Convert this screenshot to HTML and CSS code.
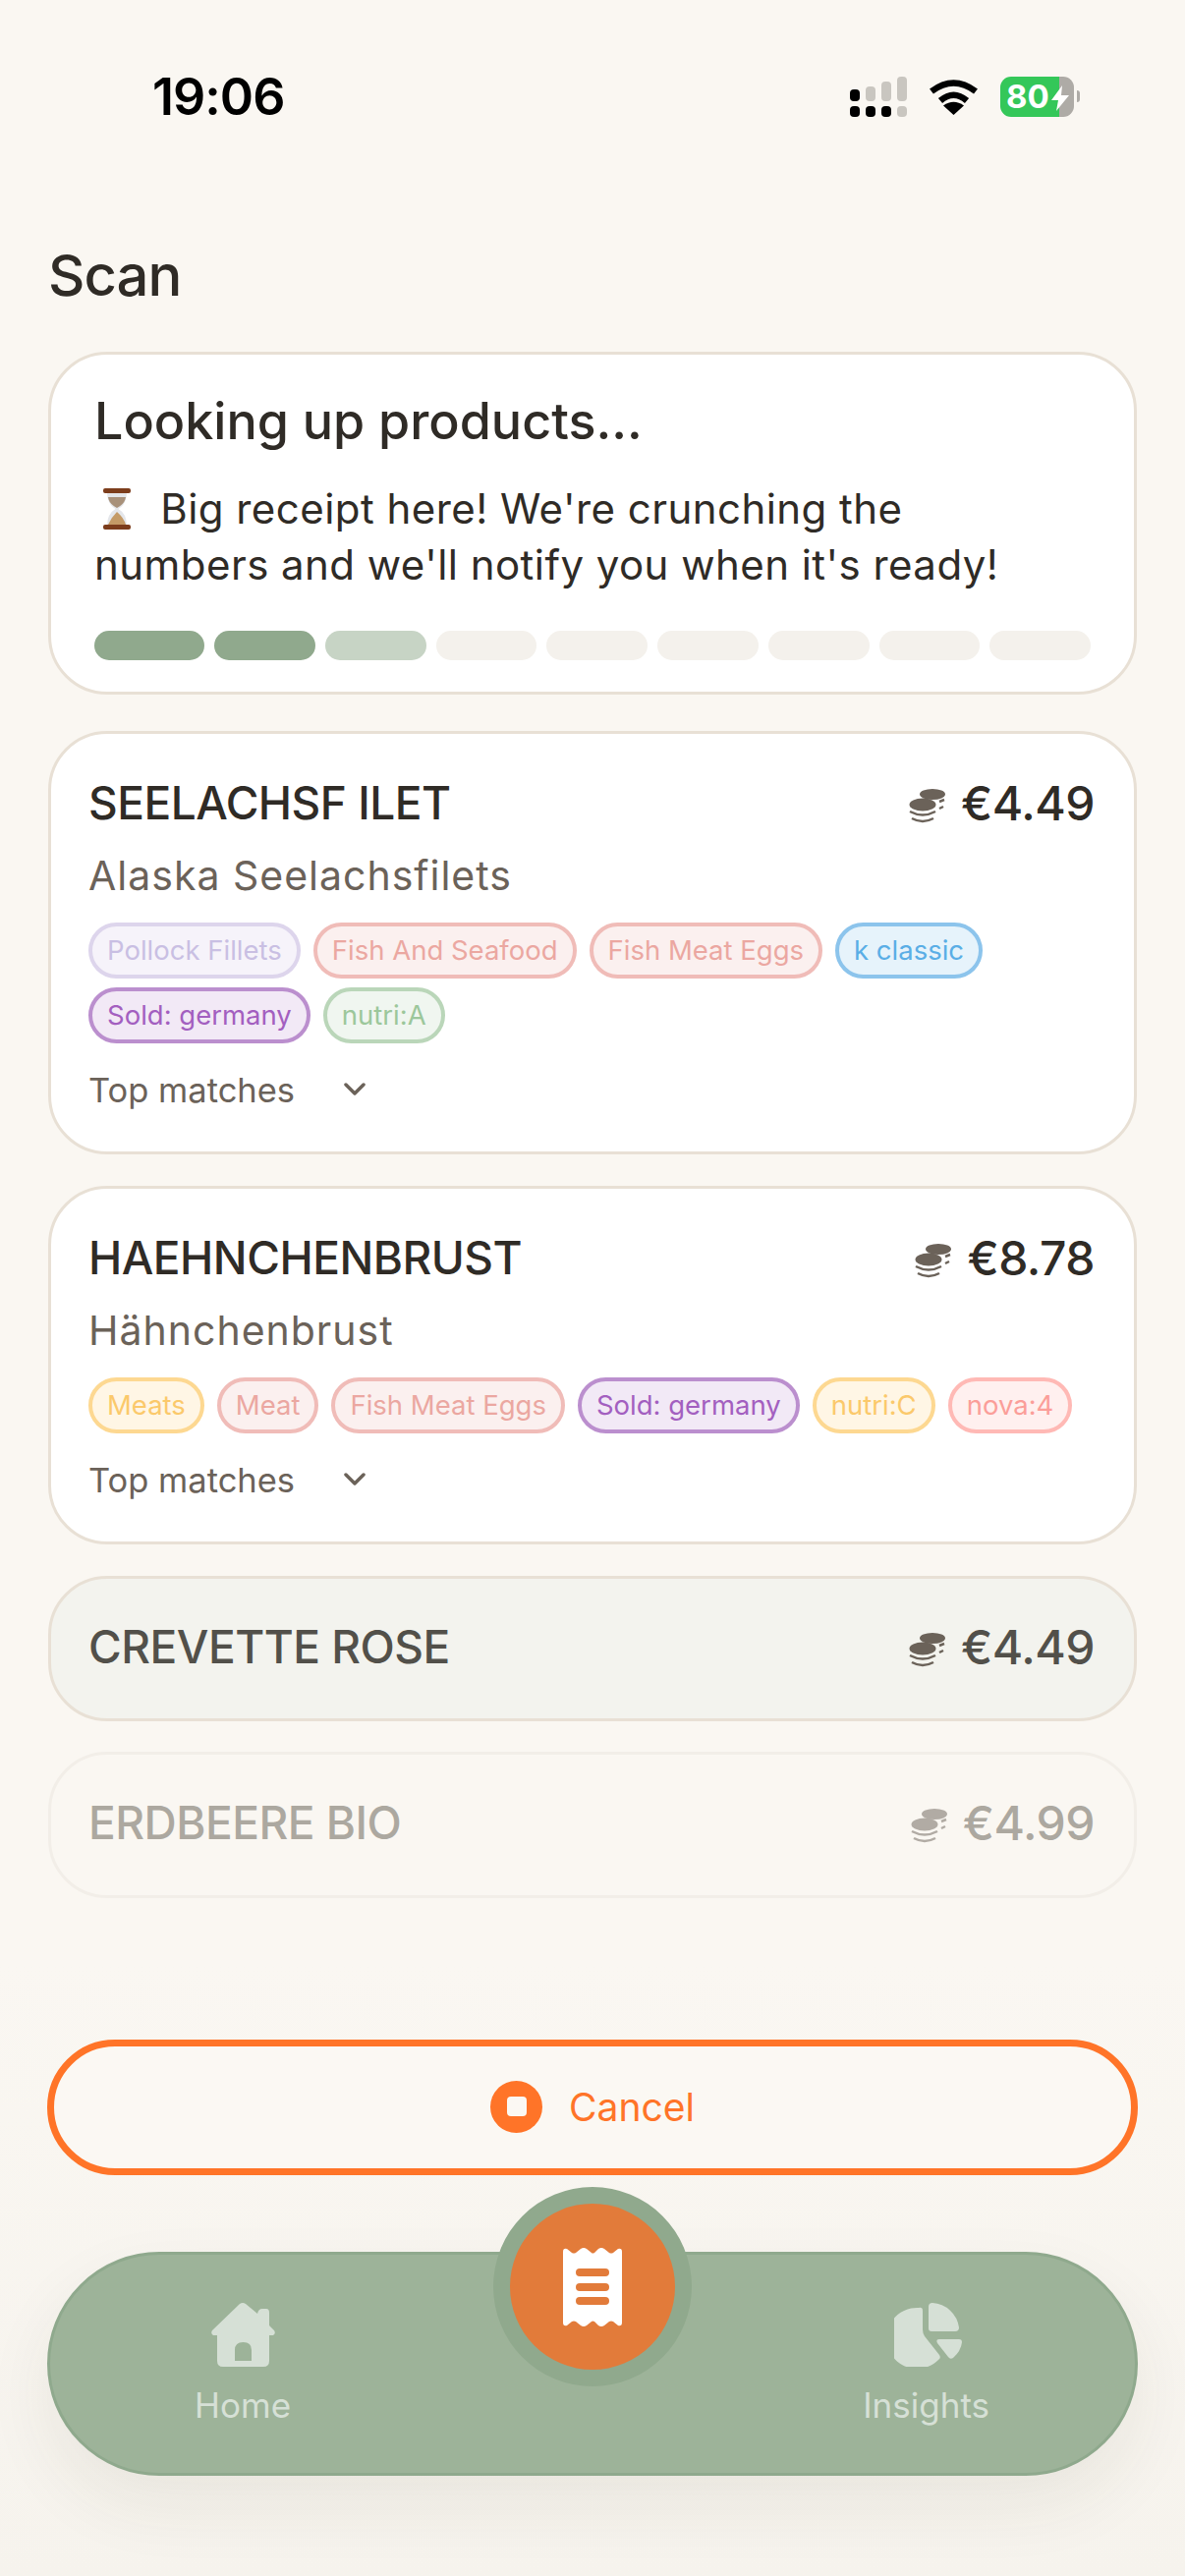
FILE: index.html
```html
<!DOCTYPE html>
<html lang="en">
<head>
    <meta charset="UTF-8">
    <meta name="viewport" content="width=device-width, initial-scale=1.0">
    <title>Scan</title>
    <link rel="stylesheet" href="styles.css">
</head>
<body>

    <!-- Status bar -->
    <header class="status-bar">
        <span class="status-time">19:06</span>
        <div class="status-icons">
            <svg class="signal" width="58" height="41" viewBox="0 0 58 41">
                <rect x="0" y="13" width="10" height="12" rx="4" fill="#000"/>
                <rect x="16" y="10" width="10" height="15" rx="4" fill="#c9c6c0"/>
                <rect x="32" y="5" width="10" height="20" rx="4" fill="#c9c6c0"/>
                <rect x="48" y="0" width="10" height="25" rx="4" fill="#c9c6c0"/>
                <rect x="0" y="30" width="10" height="11" rx="4" fill="#000"/>
                <rect x="16" y="30" width="10" height="11" rx="4" fill="#000"/>
                <rect x="32" y="30" width="10" height="11" rx="4" fill="#000"/>
                <rect x="48" y="30" width="10" height="11" rx="4" fill="#c9c6c0"/>
            </svg>
            <svg class="wifi" width="51" height="37" viewBox="0 0 51 37">
                <path d="M3 13 Q25.5 -4 48 13" fill="none" stroke="#000" stroke-width="6.5"/>
                <path d="M12 22.500 Q25.500 11 39 22.500" fill="none" stroke="#000" stroke-width="6.500"/>
                <path d="M25.500 37 L15 27.500 Q25.500 20 36 27.500 Z" fill="#000"/>
            </svg>
            <div class="battery">
                <span class="battery-level">80</span>
                <svg class="battery-bolt" width="18" height="26" viewBox="0 0 18 26">
                    <path d="M11 0 L0 15 L7 15 L5 26 L18 10 L10 10 Z" fill="#fff"/>
                </svg>
            </div>
            <div class="battery-cap"></div>
        </div>
    </header>

    <main class="content">
        <h1 class="page-title">Scan</h1>

        <!-- Progress card -->
        <section class="card lookup-card">
            <h2>Looking up products...</h2>
            <p>
                <svg class="hourglass" width="28" height="42" viewBox="0 0 28 42">
                    <path d="M4 4 L24 4 Q24 16 15.500 21 Q24 26 24 38 L4 38 Q4 26 12.500 21 Q4 16 4 4 Z" fill="#e4e6ea"/>
                    <path d="M5 9 L23 9 Q22 16 14 20 Q6 16 5 9 Z" fill="#a8917a"/>
                    <path d="M14 24 Q21 30 23 37 L5 37 Q8 30 14 24 Z" fill="#c49a66"/>
                    <rect x="0" y="0" width="28" height="5" rx="2" fill="#7c3d1c"/>
                    <rect x="0" y="37" width="28" height="5" rx="2" fill="#7c3d1c"/>
                </svg>
                Big receipt here! We're crunching the<br>numbers and we'll notify you when it's ready!
            </p>
            <div class="progress">
                <span class="seg seg-first done"></span>
                <span class="seg done"></span>
                <span class="seg active"></span>
                <span class="seg"></span>
                <span class="seg"></span>
                <span class="seg"></span>
                <span class="seg"></span>
                <span class="seg"></span>
                <span class="seg"></span>
            </div>
        </section>

        <!-- Products -->
        <section class="card product">
            <div class="product-head">
                <h3>SEELACHSF ILET</h3>
                <div class="price">
                    <svg class="coins" width="37" height="36" viewBox="0 0 37 36">
                        <ellipse cx="24" cy="6.500" rx="13" ry="5.500" fill="#6b6259"/>
                        <ellipse cx="14" cy="17" rx="13.500" ry="6.500" fill="#6b6259"/>
                        <path d="M1 24 Q14 31 27 24 M3 31 Q14 37 25 31 M31 14 L36 12 M31 21 L35 19" fill="none" stroke="#6b6259" stroke-width="2.500"/>
                    </svg>
                    <span>€4.49</span>
                </div>
            </div>
            <p class="product-sub">Alaska Seelachsfilets</p>
            <div class="tags">
                <span class="tag lavender">Pollock Fillets</span>
                <span class="tag pink">Fish And Seafood</span>
                <span class="tag pink">Fish Meat Eggs</span>
                <span class="tag blue">k classic</span>
                <span class="tag purple">Sold: germany</span>
                <span class="tag green">nutri:A</span>
            </div>
            <div class="matches">
                <span>Top matches</span>
                <svg width="24" height="14" viewBox="0 0 24 14"><path d="M3 2 L12 11 L21 2" fill="none" stroke="#6b6259" stroke-width="3.500" stroke-linecap="round" stroke-linejoin="round"/></svg>
            </div>
        </section>

        <section class="card product">
            <div class="product-head">
                <h3>HAEHNCHENBRUST</h3>
                <div class="price">
                    <svg class="coins" width="37" height="36" viewBox="0 0 37 36">
                        <ellipse cx="24" cy="6.500" rx="13" ry="5.500" fill="#6b6259"/>
                        <ellipse cx="14" cy="17" rx="13.500" ry="6.500" fill="#6b6259"/>
                        <path d="M1 24 Q14 31 27 24 M3 31 Q14 37 25 31 M31 14 L36 12 M31 21 L35 19" fill="none" stroke="#6b6259" stroke-width="2.500"/>
                    </svg>
                    <span>€8.78</span>
                </div>
            </div>
            <p class="product-sub">Hähnchenbrust</p>
            <div class="tags">
                <span class="tag yellow">Meats</span>
                <span class="tag pink">Meat</span>
                <span class="tag pink">Fish Meat Eggs</span>
                <span class="tag purple">Sold: germany</span>
                <span class="tag yellow">nutri:C</span>
                <span class="tag red">nova:4</span>
            </div>
            <div class="matches">
                <span>Top matches</span>
                <svg width="24" height="14" viewBox="0 0 24 14"><path d="M3 2 L12 11 L21 2" fill="none" stroke="#6b6259" stroke-width="3.500" stroke-linecap="round" stroke-linejoin="round"/></svg>
            </div>
        </section>

        <section class="card product pending">
            <div class="product-head">
                <h3>CREVETTE ROSE</h3>
                <div class="price">
                    <svg class="coins" width="37" height="36" viewBox="0 0 37 36">
                        <ellipse cx="24" cy="6.500" rx="13" ry="5.500" fill="#6b6259"/>
                        <ellipse cx="14" cy="17" rx="13.500" ry="6.500" fill="#6b6259"/>
                        <path d="M1 24 Q14 31 27 24 M3 31 Q14 37 25 31 M31 14 L36 12 M31 21 L35 19" fill="none" stroke="#6b6259" stroke-width="2.500"/>
                    </svg>
                    <span>€4.49</span>
                </div>
            </div>
        </section>

        <section class="card product waiting">
            <div class="product-head">
                <h3>ERDBEERE BIO</h3>
                <div class="price">
                    <svg class="coins" width="37" height="36" viewBox="0 0 37 36">
                        <ellipse cx="24" cy="6.500" rx="13" ry="5.500" fill="#6b6259"/>
                        <ellipse cx="14" cy="17" rx="13.500" ry="6.500" fill="#6b6259"/>
                        <path d="M1 24 Q14 31 27 24 M3 31 Q14 37 25 31 M31 14 L36 12 M31 21 L35 19" fill="none" stroke="#6b6259" stroke-width="2.500"/>
                    </svg>
                    <span>€4.99</span>
                </div>
            </div>
        </section>
    </main>

    <!-- Cancel and bottom navigation -->
    <footer class="dock">
        <button class="cancel-btn">
            <span class="cancel-icon"><span></span></span>
            Cancel
        </button>

        <nav class="tab-bar">
            <div class="tab">
                <svg width="66" height="66" viewBox="43 22 66 66">
                    <path fill-rule="evenodd" fill="#d6e0d6" d="M73 24 Q76 22 79 24 L91 34 Q92 29 96 29 L100 29 Q103 29 103 33 L103 46 L108 51 Q110 54 107 56 L103 56 L103 82 Q103 88 97 88 L56 88 Q50 88 50 82 L50 56 L46 56 Q43 54 45 51 Z M68 82 L85 82 L85 71 Q85 63 76.500 63 Q68 63 68 71 Z"/>
                </svg>
                <span>Home</span>
            </div>
            <div class="tab">
                <svg class="insights-icon" width="70" height="66" viewBox="51 22 70 66">
                    <path fill="#d6e0d6" d="M76 28 Q80 27 80 31 L80 50 Q80 54 82 57 L97 76 Q99 79 96 81 A31 31 0 1 1 76 28 Z"/>
                    <path fill="#d6e0d6" d="M90 23 Q86 23 86 27 L86 49 Q86 52 89 52 L113 52 Q117 52 117 48 A29 29 0 0 0 90 23 Z"/>
                    <path fill="#d6e0d6" d="M97 60 L117 60 Q120 60 120 63 Q119 72 111 79 Q108 81 106 78 L95 64 Q93 60 97 60 Z"/>
                </svg>
                <span>Insights</span>
            </div>
            <button class="scan-btn">
                <svg width="60" height="80" viewBox="0 0 60 80">
                    <path fill="#fff" d="M0 4 Q0 0 4 1 L9 5 Q11 6 13 5 L18 1 Q21 -1 24 1 L29 5 Q30 6 32 5 L36 1 Q39 -1 42 1 L47 5 Q49 6 51 5 L56 1 Q60 0 60 4 L60 76 Q60 80 56 79 L51 75 Q49 74 47 75 L42 79 Q39 81 36 79 L32 75 Q30 74 29 75 L24 79 Q21 81 18 79 L13 75 Q11 74 9 75 L4 79 Q0 80 0 76 Z"/>
                    <rect x="13" y="21" width="34" height="8" rx="4" fill="#e27b3a"/>
                    <rect x="13" y="36" width="34" height="8" rx="4" fill="#e27b3a"/>
                    <rect x="13" y="50" width="34" height="8" rx="4" fill="#e27b3a"/>
                </svg>
            </button>
        </nav>
    </footer>

</body>
</html>
```

FILE: styles.css
```css
/* General body and layout styling */
body {
    font-family: 'Inter', 'Noto Sans', sans-serif;
    background-color: #faf7f2;
    color: #2f2b26;
    margin: 0;
    padding: 0;
    display: flex;
    flex-direction: column;
    min-height: 100vh;
    box-sizing: border-box;
}

/* Status bar */
.status-bar {
    display: flex;
    justify-content: space-between;
    align-items: center;
    padding: 67px 107px 0 155px;
    height: 62px;
}

.status-time {
    font-size: 52px;
    font-weight: 600;
    letter-spacing: -1px;
    color: #000;
}

.status-icons {
    display: flex;
    align-items: center;
}

.wifi {
    margin-left: 22px;
}

.battery {
    position: relative;
    margin-left: 22px;
    width: 75px;
    height: 41px;
    border-radius: 11px;
    background: linear-gradient(to right, #34c759 80%, #aeaba6 80%);
    display: flex;
    align-items: center;
}

.battery-level {
    color: #fff;
    font-size: 33px;
    font-weight: 700;
    margin-left: 6px;
}

.battery-bolt {
    position: absolute;
    left: 52px;
    top: 9px;
}

.battery-cap {
    margin-left: 3px;
    width: 3px;
    height: 12px;
    border-radius: 0 3px 3px 0;
    background-color: #aeaba6;
}

/* Main content */
.content {
    flex: 1;
    padding: 0 49px;
    display: flex;
    flex-direction: column;
}

.page-title {
    font-size: 58px;
    font-weight: 500;
    letter-spacing: -1px;
    line-height: 68px;
    margin: 117px 0 44px;
}

.card {
    background-color: #fff;
    border: 3px solid #e8e0d5;
    border-radius: 60px;
    box-sizing: border-box;
}

/* Looking up card */
.lookup-card {
    height: 349px;
    padding: 38px 44px 0;
    margin-bottom: 37px;
}

.lookup-card h2 {
    font-size: 52px;
    font-weight: 500;
    line-height: 60px;
    margin: 0;
}

.lookup-card p {
    font-size: 42px;
    letter-spacing: 0.45px;
    line-height: 57px;
    margin: 30px 0 0;
}

.hourglass {
    vertical-align: -6px;
    margin: 0 18px 0 9px;
}

.progress {
    display: flex;
    gap: 10px;
    margin-top: 39px;
}

.seg {
    flex: 1;
    height: 30px;
    border-radius: 15px;
    background-color: #f4f1ec;
}

.seg-first {
    flex: 1.09;
}

.seg.done {
    background-color: #90a98d;
}

.seg.active {
    background-color: #c7d4c5;
}

/* Product cards */
.product {
    padding: 40px 40px 0 38px;
    margin-bottom: 32px;
}

.product-head {
    display: flex;
    justify-content: space-between;
    align-items: center;
    height: 60px;
}

.product-head h3 {
    font-size: 46px;
    font-weight: 500;
    letter-spacing: -0.5px;
    margin: 0;
}

.price {
    display: flex;
    align-items: center;
    gap: 16px;
    font-size: 48px;
    font-weight: 500;
    letter-spacing: -0.5px;
}

.coins {
    margin-top: 6px;
}

.product-sub {
    font-size: 41px;
    letter-spacing: 1px;
    color: #6b6259;
    line-height: 50px;
    margin: 19px 0 0;
}

.tags {
    display: flex;
    flex-wrap: wrap;
    gap: 9px 13px;
    margin-top: 23px;
}

.tag {
    box-sizing: border-box;
    height: 57px;
    padding: 0 15px;
    border: 4px solid;
    border-radius: 29px;
    font-size: 27.5px;
    line-height: 49px;
}

.lavender { background-color: #f6f3fa; border-color: #ddd5ec; color: #c9bfe3; }
.pink { background-color: #fbf0ef; border-color: #f0bcb8; color: #eba7a1; }
.blue { background-color: #e6f3fb; border-color: #8cc4ec; color: #5aaee6; }
.purple { background-color: #f2e9f6; border-color: #bb8fce; color: #a35fc0; }
.green { background-color: #f0f6f0; border-color: #bad6b9; color: #9cc79b; }
.yellow { background-color: #fff6e5; border-color: #fdd891; color: #fbc96b; }
.red { background-color: #fff0ef; border-color: #ffb9b5; color: #fb9e99; }

.matches {
    display: flex;
    align-items: center;
    gap: 49px;
    font-size: 34.500px;
    color: #6b6259;
    height: 44px;
    margin-top: 25px;
    padding-bottom: 41px;
}

.pending {
    height: 148px;
    padding-top: 39px;
    background-color: #f3f3ee;
    margin-bottom: 31px;
}

.pending h3,
.pending .price {
    color: #52504a;
}

.waiting {
    height: 149px;
    padding-top: 39px;
    background-color: transparent;
    border-color: #f2eee8;
    margin-bottom: 0;
}

.waiting h3,
.waiting .price {
    color: #aca8a0;
}

.waiting .coins {
    opacity: 0.5;
}

/* Bottom dock */
.dock {
    padding: 80px 48px 102px;
    background: linear-gradient(to bottom, #faf7f2, #f6f3ed);
}

.cancel-btn {
    width: 100%;
    height: 138px;
    box-sizing: border-box;
    padding: 0 0 2px;
    background-color: #fbf8f3;
    border: 7px solid #ff7428;
    border-radius: 69px;
    display: flex;
    justify-content: center;
    align-items: center;
    gap: 27px;
    color: #ff7428;
    font-family: inherit;
    font-size: 39px;
    cursor: pointer;
}

.cancel-icon {
    width: 53px;
    height: 53px;
    border-radius: 50%;
    background-color: #ff7428;
    display: flex;
    justify-content: center;
    align-items: center;
}

.cancel-icon span {
    width: 20px;
    height: 20px;
    border-radius: 4px;
    background-color: #fbf8f3;
}

.tab-bar {
    position: relative;
    box-sizing: border-box;
    height: 228px;
    margin-top: 78px;
    padding: 48px 148px 0 147px;
    background-color: #9db399;
    border: 3px solid #8fa98d;
    border-radius: 114px;
    display: flex;
    justify-content: space-between;
    box-shadow: 0 30px 70px rgba(60, 50, 30, 0.07);
}

.tab {
    display: flex;
    flex-direction: column;
    align-items: center;
    gap: 18px;
    color: #d6e0d6;
    font-size: 35px;
}

.insights-icon {
    margin-left: 4px;
}

.scan-btn {
    position: absolute;
    top: -69px;
    left: 451px;
    width: 202px;
    height: 203px;
    padding: 0;
    box-sizing: border-box;
    border: 17px solid #90a98d;
    border-radius: 50%;
    background-color: #e27b3a;
    display: flex;
    justify-content: center;
    align-items: center;
    cursor: pointer;
}
```
